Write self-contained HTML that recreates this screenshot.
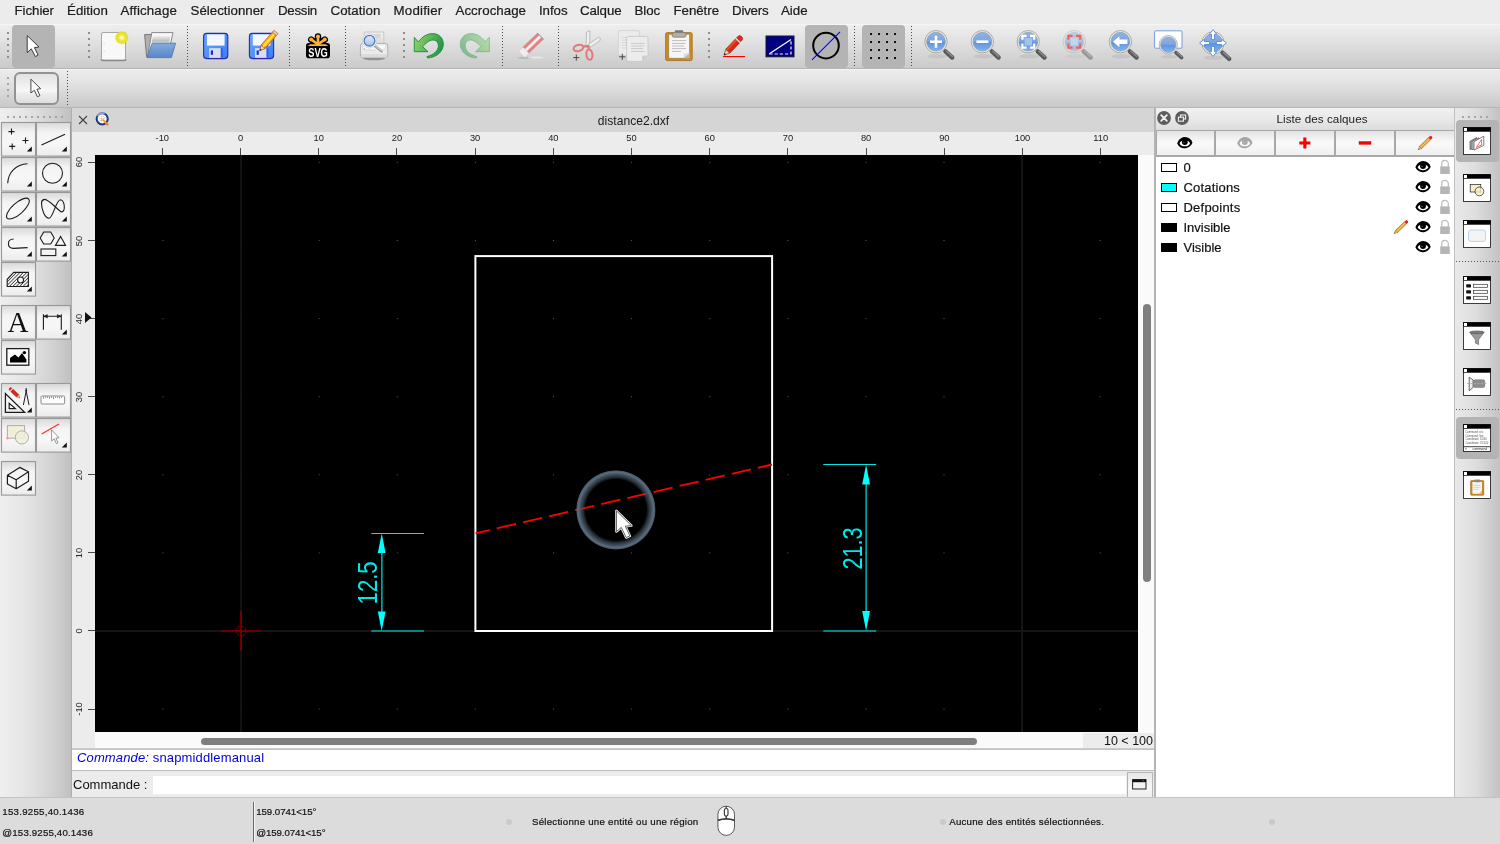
<!DOCTYPE html>
<html lang="fr">
<head>
<meta charset="utf-8">
<title>distance2.dxf</title>
<style>
html,body{margin:0;padding:0;}
body{width:1500px;height:844px;overflow:hidden;position:relative;background:#ececec;font-family:"Liberation Sans",sans-serif;color:#1a1a1a;}
#root{position:absolute;left:0;top:0;width:1500px;height:844px;will-change:transform;}
.abs{position:absolute;}
svg{position:absolute;overflow:visible;}
#menubar{left:0;top:0;width:1500px;height:24px;background:#ececec;}
#menubar span{position:absolute;top:2px;-webkit-text-stroke:0.22px #1c1c1c;font-size:13.3px;line-height:17px;white-space:nowrap;color:#1c1c1c;}
#tb1{left:0;top:24px;width:1500px;height:45px;background:linear-gradient(#f5f5f5 0,#f5f5f5 1px,#eeeeee 1px,#e6e6e6 12px,#cacaca 44px,#b6b6b6 44px);}
#tb2{left:0;top:69px;width:1500px;height:39px;background:linear-gradient(#f3f3f3 0,#f3f3f3 1px,#ececec 1px,#e4e4e4 12px,#c9c9c9 38px,#b6b6b6 38px);}
.hdl{position:absolute;width:2px;height:2px;background:#a6a6a6;}
.vsep{position:absolute;width:1px;background-image:linear-gradient(#555 34%,transparent 34%);background-size:1px 3px;}
#lefttb{left:0;top:108px;width:72px;height:690px;background:linear-gradient(90deg,#efefef,#e3e3e3 40%,#d0d0d0 75%,#c0c0c0);}
.lb{position:absolute;width:33px;height:33px;border:1px solid #9c9c9c;background:linear-gradient(#dcdcdc,#f6f6f6 35%,#f6f6f6 60%,#ececec);box-sizing:content-box;}
.lb svg{left:0;top:0;}
#tabbar{left:72px;top:108px;width:1082px;height:24px;background:#d5d5d5;}
#hruler{left:72px;top:132px;width:1082px;height:23px;background:#ececec;}
#vruler{left:72px;top:155px;width:23px;height:577px;background:#ececec;}
#canvas{left:95px;top:155px;width:1043px;height:577px;background:#000;overflow:hidden;}
#vscroll{left:1138px;top:155px;width:16px;height:577px;background:#fafafa;}
#hscroll{left:72px;top:732px;width:1082px;height:16px;background:#fafafa;}
#split{left:1154px;top:108px;width:2px;height:690px;background:#b4b4b4;}
#rightpanel{left:1156px;top:108px;width:298px;height:690px;background:#fff;}
#righttb{left:1455px;top:108px;width:45px;height:690px;background:linear-gradient(90deg,#e9e9e9,#dedede 45%,#c2c2c2);}
#cmdhist{left:72px;top:750px;width:1082px;height:20px;background:#fff;}
#cmdline{left:72px;top:772px;width:1082px;height:26px;background:#ececec;}
#status{left:0;top:798px;width:1500px;height:46px;background:#dcdcdc;}
.st{position:absolute;-webkit-text-stroke:0.2px #111;font-size:9.7px;line-height:12px;white-space:nowrap;color:#111;}
.rl{position:absolute;font-size:9.3px;line-height:10px;height:10px;color:#222;white-space:nowrap;text-align:center;}
.hrl{width:30px;margin-left:-15px;top:132.7px;}
.vrl{width:30px;height:10px;left:63.5px;transform:rotate(-90deg);margin-top:-5px;}
.tick{position:absolute;background:#4a4a4a;}
.lcb{position:absolute;top:131px;height:24px;background:linear-gradient(#e2e2e2,#f8f8f8 45%,#f8f8f8 60%,#efefef);}
.ly{position:absolute;-webkit-text-stroke:0.2px #111;left:1183.5px;margin-top:0.5px;font-size:13px;line-height:14px;color:#111;white-space:nowrap;}
</style>
</head>
<body>
<div id="root">
<div id="menubar" class="abs">
<span style="left:14.5px;letter-spacing:-0.06px">Fichier</span><span style="left:67px;letter-spacing:0.05px">Édition</span><span style="left:120.5px;letter-spacing:0.14px">Affichage</span><span style="left:190.5px;letter-spacing:0.01px">Sélectionner</span><span style="left:278px;letter-spacing:-0.28px">Dessin</span><span style="left:330.5px;letter-spacing:0.06px">Cotation</span><span style="left:393.5px;letter-spacing:0.21px">Modifier</span><span style="left:455.5px;letter-spacing:0.03px">Accrochage</span><span style="left:539px;letter-spacing:-0.07px">Infos</span><span style="left:580px;letter-spacing:-0.11px">Calque</span><span style="left:634.5px;letter-spacing:-0.09px">Bloc</span><span style="left:673.5px;letter-spacing:-0.05px">Fenêtre</span><span style="left:732px;letter-spacing:-0.20px">Divers</span><span style="left:781px;letter-spacing:-0.03px">Aide</span>
</div>
<div id="tb1" class="abs"></div>
<div class="abs" style="left:12px;top:25px;width:43px;height:43px;border-radius:4px;background:#b4b4b4"></div>
<div class="abs" style="left:805px;top:25px;width:43px;height:43px;border-radius:4px;background:#b4b4b4"></div>
<div class="abs" style="left:862px;top:25px;width:43px;height:43px;border-radius:4px;background:#b4b4b4"></div>
<svg width="1500" height="45" viewBox="0 24 1500 45" style="left:0;top:24px">
<defs>
<linearGradient id="gBlue" x1="0" y1="0" x2="0" y2="1"><stop offset="0" stop-color="#8eb2e4"/><stop offset="0.48" stop-color="#7ea6e0"/><stop offset="0.52" stop-color="#5f94dc"/><stop offset="1" stop-color="#7fb4f0"/></linearGradient>
<linearGradient id="gGreen" x1="0" y1="0" x2="1" y2="0.3"><stop offset="0" stop-color="#96d868"/><stop offset="1" stop-color="#2a9a4a"/></linearGradient>
<linearGradient id="gSave" x1="0" y1="0" x2="1" y2="1"><stop offset="0" stop-color="#6aa8ff"/><stop offset="1" stop-color="#3a7cf4"/></linearGradient>
<linearGradient id="gFold" x1="0" y1="0" x2="0" y2="1"><stop offset="0" stop-color="#86acdc"/><stop offset="1" stop-color="#5688c8"/></linearGradient>
<radialGradient id="gGlow"><stop offset="0" stop-color="#ffffff"/><stop offset="0.16" stop-color="#fdfbd4"/><stop offset="0.4" stop-color="#f0e832"/><stop offset="0.78" stop-color="#e6de1e" stop-opacity="0.95"/><stop offset="1" stop-color="#e6de1e" stop-opacity="0"/></radialGradient><linearGradient id="gPap" x1="0" y1="0" x2="0" y2="1"><stop offset="0" stop-color="#fcfcfc"/><stop offset="0.3" stop-color="#e2e2e2"/><stop offset="0.75" stop-color="#bcbcbc"/><stop offset="1" stop-color="#e0e0e0"/></linearGradient>
<g id="hd"><rect x="0" y="32" width="2" height="2"/><rect x="0" y="38" width="2" height="2"/><rect x="0" y="44" width="2" height="2"/><rect x="0" y="50" width="2" height="2"/><rect x="0" y="56" width="2" height="2"/></g>
<line id="sp" x1="0.5" y1="26" x2="0.5" y2="66" stroke="#4a4a4a" stroke-width="1" stroke-dasharray="1 2"/>
<g id="mag">
<ellipse cx="1" cy="14.6" rx="10" ry="2.2" fill="#000" opacity="0.07"/>
<line x1="9.4" y1="9.6" x2="16.2" y2="15.8" stroke="#5a5a5a" stroke-width="4.4" stroke-linecap="round"/>
<line x1="10.4" y1="9.4" x2="16.4" y2="14.8" stroke="#8e8e8e" stroke-width="1.3" stroke-linecap="round"/>
<circle cx="0" cy="0" r="11.2" fill="#ebebe4" stroke="#a4a49c" stroke-width="0.9"/>
<circle cx="0" cy="0" r="9.4" fill="url(#gBlue)" stroke="#8c9cb0" stroke-width="0.7"/>
</g>
</defs>
<g fill="#8e8e8e"><use href="#hd" x="7"/><use href="#hd" x="88"/><use href="#hd" x="403"/><use href="#hd" x="708"/></g>
<use href="#sp" x="187"/><use href="#sp" x="289"/><use href="#sp" x="345"/><use href="#sp" x="502"/><use href="#sp" x="558"/><use href="#sp" x="854"/><use href="#sp" x="911"/>
<!-- select arrow -->
<path d="M27.2 35.6 L27.2 52.6 L31.3 48.8 L35.4 56.6 L38.1 55 L34.4 47.6 L39 47 Z" fill="#fff" stroke="#3a3a3a" stroke-width="1" stroke-linejoin="round"/>
<!-- new -->
<rect x="101.5" y="32.5" width="24" height="27.5" rx="1.5" fill="#f8f8f8" stroke="#a6a6a6" stroke-width="1"/><path d="M103.6 43.4 h1.2 M103.6 51 h1.2" stroke="#c8c8c8" stroke-width="0.8"/>
<path d="M101 59.2 Q101 60.6 102.6 60.6 L124.2 60.6 Q126 60.6 126 59.2" fill="none" stroke="#8a8a8a" stroke-width="1.3"/>
<circle cx="121.8" cy="37.7" r="7.1" fill="url(#gGlow)"/>
<!-- open -->
<path d="M144.6 34.6 L151.4 34.6 L152 36.5 L166 36.5 L166 56.8 L146.6 56.8 Z" fill="#b0b0b0" stroke="#6e6e6e" stroke-width="0.9" stroke-linejoin="round"/>
<path d="M151.8 32.6 L173 32.6 L170 46 L147.6 56 Z" fill="#f8f8f8" stroke="#7e7e7e" stroke-width="0.9" stroke-linejoin="round"/>
<path d="M153.6 34.8 L171 34.8 L169 43 L151.2 43 Z" fill="url(#gPap)"/>
<path d="M152.2 43.2 L175.6 43.2 L171.4 57.6 L147 57.6 Z" fill="url(#gFold)" stroke="#4c7cbc" stroke-width="0.9" stroke-linejoin="round"/>
<!-- save -->
<g id="floppy">
<rect x="203.6" y="33.4" width="24.2" height="25.2" rx="3" fill="url(#gSave)" stroke="#2a2aa8" stroke-width="1.1"/>
<rect x="207" y="34.4" width="17.6" height="11.2" fill="#f4f6ff"/>
<rect x="209.2" y="48.2" width="11.4" height="9.6" fill="#dcdcea"/>
<rect x="210.8" y="50.4" width="2.2" height="4.4" fill="#0a30d8"/>
<rect x="221" y="48.2" width="1.6" height="9" fill="#2a5cf0"/>
</g>
<use href="#floppy" x="45.8"/>
<!-- pencil on save-as -->
<g transform="translate(259.6,50.8) rotate(-49)">
<path d="M0 0 L5.5 -2.6 L5.5 2.6 Z" fill="#f0d8b0" stroke="#8a3a10" stroke-width="0.6"/>
<path d="M0 0 L2 -0.95 L2 0.95 Z" fill="#222"/>
<rect x="5.5" y="-2.6" width="17" height="5.2" fill="#ffb400" stroke="#b84a10" stroke-width="0.7"/>
<rect x="5.5" y="-0.9" width="17" height="1.8" fill="#ffe060"/>
<rect x="22.5" y="-2.6" width="2.4" height="5.2" fill="#d8d8d8" stroke="#b84a10" stroke-width="0.6"/>
</g>
<!-- SVG logo -->
<g>
<g stroke="#000" stroke-width="6.4" stroke-linecap="round"><line x1="318" y1="44.5" x2="318" y2="36.4"/><line x1="318" y1="44.5" x2="311.2" y2="39.6"/><line x1="318" y1="44.5" x2="324.8" y2="39.6"/></g>
<rect x="306" y="43" width="24" height="15.2" rx="2.8" fill="#000"/>
<g stroke="#ffb13b" stroke-width="2.6" stroke-linecap="round"><line x1="318" y1="44.4" x2="318" y2="36.6"/><line x1="318" y1="44.4" x2="311.6" y2="39.8"/><line x1="318" y1="44.4" x2="324.4" y2="39.8"/></g>
<circle cx="318" cy="36.4" r="2" fill="#ffb13b"/><circle cx="311.2" cy="39.6" r="2" fill="#ffb13b"/><circle cx="324.8" cy="39.6" r="2" fill="#ffb13b"/>
<path d="M307.8 46 L328.2 46 L326 44.2 L310 44.2 Z" fill="#ffb13b"/>
<text x="318" y="56.8" text-anchor="middle" font-family="Liberation Sans, sans-serif" font-weight="bold" font-size="13.4" fill="#fff" textLength="19.6" lengthAdjust="spacingAndGlyphs">SVG</text>
</g>
<!-- print preview -->
<g>
<defs><linearGradient id="gLens" x1="0" y1="0" x2="0" y2="1"><stop offset="0" stop-color="#dde8f6"/><stop offset="0.55" stop-color="#c4d4ea"/><stop offset="1" stop-color="#a4bcdc"/></linearGradient></defs>
<ellipse cx="374" cy="58.4" rx="11" ry="1.8" fill="#000" opacity="0.3"/>
<rect x="364.4" y="32" width="19.4" height="14" rx="1" fill="#eeeeee" stroke="#bdbdbd" stroke-width="0.8"/>
<rect x="372" y="34" width="8.6" height="4" fill="#d6d6d6"/><rect x="377" y="38" width="5.6" height="7" fill="#e0e0e0"/>
<rect x="360.4" y="43.4" width="27.4" height="14.2" rx="2.6" fill="#ebebeb" stroke="#a8a8a8" stroke-width="0.9"/>
<path d="M361 54 h26.2 v1.6 q0 2 -2 2 h-22.2 q-2 0 -2 -2 Z" fill="#dcdcdc"/>
<path d="M362.6 45.6 q0 4.4 3 4.4 h17.2 q3 0 3 -4.4" fill="#f8f8f8" stroke="#c4c4c4" stroke-width="0.6"/>
<circle cx="364.4" cy="49" r="0.6" fill="#888"/>
<line x1="374.6" y1="45.6" x2="381.6" y2="51.4" stroke="#fafafa" stroke-width="4.6" stroke-linecap="round"/>
<line x1="374.6" y1="45.6" x2="381.6" y2="51.4" stroke="#a8a8a8" stroke-width="3" stroke-linecap="round"/>
<line x1="375.6" y1="45.6" x2="381.8" y2="50.8" stroke="#dcdcdc" stroke-width="0.9" stroke-linecap="round"/>
<circle cx="369.5" cy="40.8" r="7.2" fill="#fdfdfd" stroke="#c4c4c4" stroke-width="0.7"/>
<circle cx="369.5" cy="40.8" r="5.4" fill="url(#gLens)" stroke="#3f78c8" stroke-width="1.3"/>
</g>
<!-- undo / redo -->
<path id="undo" d="M414.3 37.3 L418.3 42 C422 37 427 33.6 432.5 33.6 C439 33.6 443.3 38 443.3 44.2 C443.3 52 436 57.4 427.6 58 L427 56.6 C433.4 55 438.4 51 438.4 45.6 C438.4 42 436 40 433 40 C429 40 425.5 43.5 422.7 46.7 L428 51.7 L414.3 51.7 Z" fill="url(#gGreen)" stroke="#1c8a3c" stroke-width="0.9" stroke-linejoin="round"/>
<use href="#undo" transform="translate(903.6,0) scale(-1,1)" opacity="0.48"/>
<!-- eraser -->
<g transform="translate(521.6,54.3) rotate(-43.8)" opacity="0.9">
<ellipse cx="3" cy="3.6" rx="7" ry="1.3" fill="#999" opacity="0.45" transform="rotate(43.8)"/><ellipse cx="14" cy="3.2" rx="8" ry="1.1" fill="#fff" opacity="0.5" transform="rotate(43.8)"/>
<rect x="0" y="-4.5" width="26.4" height="9" fill="#e47a7a"/>
<rect x="0" y="-1.4" width="26.4" height="2.8" fill="#f4f4f4"/>
<rect x="0" y="-4.5" width="6" height="9" fill="#f2f2f2" stroke="#ccc" stroke-width="0.4"/>
<rect x="25.6" y="-4.5" width="1" height="9" fill="#999"/>
</g>
<!-- cut -->
<g>
<path d="M586 47 L586.6 32 L590 30.6 L589.6 47 Z" fill="#efefef" stroke="#a8a8a8" stroke-width="0.7"/>
<path d="M588.6 44.2 L598.4 37.4 L600.6 38.6 L599.6 41 L590 47.4 Z" fill="#efefef" stroke="#a8a8a8" stroke-width="0.7"/>
<ellipse cx="578.4" cy="48" rx="4.9" ry="3.1" fill="none" stroke="#e27878" stroke-width="2" transform="rotate(-14 578.4 48)"/>
<ellipse cx="589.4" cy="54.6" rx="3" ry="5.2" fill="none" stroke="#e27878" stroke-width="2" transform="rotate(-6 589.4 54.6)"/>
<path d="M583 46.6 L588 46 L589.2 49.6" fill="none" stroke="#e27878" stroke-width="2.2"/>
<path d="M573.2 57.6 L579.4 57.6 M576.3 54.5 L576.3 60.7" stroke="#3a3a3a" stroke-width="0.9"/>
</g>
<!-- copy -->
<g>
<rect x="618.4" y="30.6" width="21.2" height="24.8" rx="1.6" fill="#ebebeb" stroke="#cfcfcf" stroke-width="0.8"/>
<path d="M622 37.4 h14 M622 40 h14 M622 42.6 h14 M622 45.4 h14 M622 48 h14" stroke="#d6d6d6" stroke-width="1"/>
<path d="M626.6 38 Q626.6 36.4 628.2 36.4 L646.4 36.4 Q648 36.4 648 38 L648 55.4 L642 61.4 L628.2 61.4 Q626.6 61.4 626.6 59.8 Z" fill="#ececec" stroke="#c4c4c4" stroke-width="0.8"/>
<path d="M648 55.4 L642 61.4 L642 56.6 Q642 55.4 643.2 55.4 Z" fill="#cfcfcf"/>
<path d="M631 43.4 h13.6 M631 46 h13 M631 48.6 h12 M631 51.4 h13.6" stroke="#cacaca" stroke-width="1"/>
<path d="M619.2 56.8 L625.4 56.8 M622.3 53.7 L622.3 59.9" stroke="#3a3a3a" stroke-width="0.9"/>
</g>
<!-- paste -->
<g>
<rect x="665.6" y="32.6" width="26.6" height="28" rx="1.6" fill="#cd8a1e" stroke="#a86a14" stroke-width="0.8"/>
<rect x="668.8" y="34.2" width="20.8" height="24" fill="#f6f6f6" stroke="#8a7a5a" stroke-width="0.6"/>
<path d="M683.6 58.2 L689.6 58.2 L689.6 52.6 Z" fill="#b8b8b8"/><path d="M683.6 58.2 L683.6 53.6 L688.6 53.2 Z" fill="#d8d8d8" opacity="0.8"/>
<path d="M672 40.6 h14 M672 43.4 h13.4 M672 46 h12 M672 48.6 h14 M672 51.4 h9" stroke="#bdbdbd" stroke-width="1"/>
<rect x="674.8" y="30.2" width="8.4" height="3.4" rx="0.8" fill="#7a7a72"/>
<rect x="672.2" y="32.6" width="13.8" height="4.6" rx="1.4" fill="#b0b0a4" stroke="#77776c" stroke-width="0.7"/>
</g>
<!-- pencil red -->
<g transform="translate(724,55.2) rotate(-46.6)">
<path d="M0 0 L5.6 -2.8 L5.6 2.8 Z" fill="#f0d4b0" stroke="#6a3a10" stroke-width="0.6"/>
<path d="M0 0 L2 -1 L2 1 Z" fill="#111"/>
<rect x="5.6" y="-2.8" width="14" height="5.6" fill="#e0241c" stroke="#7a3010" stroke-width="0.7"/>
<rect x="5.6" y="-2.4" width="14" height="1.7" fill="#e8501c"/>
<rect x="19.6" y="-2.8" width="1.8" height="5.6" fill="#cfcfcf"/>
<path d="M21.4 -2.8 L23.6 -2.8 Q25.6 -2.8 25.6 0 Q25.6 2.8 23.6 2.8 L21.4 2.8 Z" fill="#f02020" stroke="#7a3010" stroke-width="0.6"/>
</g>
<rect x="723" y="56" width="22" height="1.1" fill="#ff0000"/>
<!-- navy -->
<rect x="766" y="36" width="28" height="20.8" fill="#000080" stroke="#161636" stroke-width="1"/>
<path d="M769.4 53.8 L791 39.4" stroke="#fff" stroke-width="1.2"/>
<path d="M769.4 54 L791 54 L791 39.4" stroke="#e6e6f4" stroke-width="1.2" fill="none" stroke-dasharray="3.2 2"/>
<!-- circle -->
<circle cx="826" cy="45.6" r="12.8" fill="none" stroke="#000" stroke-width="2"/>
<path d="M812 59.8 L840 31.8" stroke="#0000ff" stroke-width="1.1"/>
<!-- grid -->
<g fill="#111">
<rect x="870" y="33" width="2" height="2"/><rect x="878" y="33" width="2" height="2"/><rect x="886" y="33" width="2" height="2"/><rect x="894" y="33" width="2" height="2"/>
<rect x="870" y="41" width="2" height="2"/><rect x="878" y="41" width="2" height="2"/><rect x="886" y="41" width="2" height="2"/><rect x="894" y="41" width="2" height="2"/>
<rect x="870" y="49" width="2" height="2"/><rect x="878" y="49" width="2" height="2"/><rect x="886" y="49" width="2" height="2"/><rect x="894" y="49" width="2" height="2"/>
<rect x="870" y="57" width="2" height="2"/><rect x="878" y="57" width="2" height="2"/><rect x="886" y="57" width="2" height="2"/><rect x="894" y="57" width="2" height="2"/>
</g>
<!-- zooms -->
<use href="#mag" x="936" y="41.7"/>
<path d="M930 41.7 h12 M936 35.7 v12" stroke="#fff" stroke-width="2.6"/>
<use href="#mag" x="982.4" y="41.7"/>
<path d="M976.4 41.7 h12" stroke="#fff" stroke-width="2.6"/>
<use href="#mag" x="1028.3" y="41.7"/>
<rect x="1024.6" y="38" width="7.4" height="7.4" fill="#a4c0ec"/>
<path d="M1022.4 39.8 v-4 h4.2 M1030 35.8 h4.2 v4 M1034.2 43.6 v4 h-4.2 M1026.6 47.6 h-4.2 v-4" stroke="#fff" stroke-width="2.2" fill="none"/>
<g opacity="0.5"><use href="#mag" x="1074.3" y="41.7"/></g>
<rect x="1070.6" y="38" width="7.4" height="7.4" fill="#c4d4ec"/>
<path d="M1068.4 39.8 v-4 h4.2 M1076 35.8 h4.2 v4 M1080.2 43.6 v4 h-4.2 M1072.6 47.6 h-4.2 v-4" stroke="#ee6262" stroke-width="2.2" fill="none"/>
<use href="#mag" x="1120.4" y="41.7"/>
<path d="M1113 41.7 L1119.4 36.2 L1119.4 39.4 L1127.4 39.4 L1127.4 44 L1119.4 44 L1119.4 47.2 Z" fill="#fff"/>
<!-- window zoom -->
<rect x="1154.6" y="30.8" width="27.4" height="17.4" rx="1" fill="#fdfdfd" stroke="#6a94d4" stroke-width="0.9"/>
<g transform="translate(1168.3,44.7) scale(0.82)"><use href="#mag"/></g>
<!-- pan -->
<use href="#mag" x="1213" y="43"/>
<g fill="#fff" stroke="#4a80d4" stroke-width="0.8" stroke-linejoin="round"><path transform="translate(1213,43) rotate(0)" d="M0 -13.4 L3.7 -8.6 L1.5 -8.6 L1.5 -3.4 L-1.5 -3.4 L-1.5 -8.6 L-3.7 -8.6 Z"/><path transform="translate(1213,43) rotate(90)" d="M0 -13.4 L3.7 -8.6 L1.5 -8.6 L1.5 -3.4 L-1.5 -3.4 L-1.5 -8.6 L-3.7 -8.6 Z"/><path transform="translate(1213,43) rotate(180)" d="M0 -13.4 L3.7 -8.6 L1.5 -8.6 L1.5 -3.4 L-1.5 -3.4 L-1.5 -8.6 L-3.7 -8.6 Z"/><path transform="translate(1213,43) rotate(270)" d="M0 -13.4 L3.7 -8.6 L1.5 -8.6 L1.5 -3.4 L-1.5 -3.4 L-1.5 -8.6 L-3.7 -8.6 Z"/></g>
</svg>
<div id="tb2" class="abs"></div>
<div class="abs" style="left:14px;top:72px;width:41px;height:29px;border:2px solid #929292;border-radius:6px;background:linear-gradient(#e2e2e2,#f1f1f1 45%,#f8f8f8 56%,#ececec 70%,#dedede)"></div>
<svg width="200" height="39" viewBox="0 69 200 39" style="left:0;top:69px">
<g fill="#a2a2a2"><rect x="7" y="77" width="2" height="2"/><rect x="7" y="83" width="2" height="2"/><rect x="7" y="89" width="2" height="2"/><rect x="7" y="95" width="2" height="2"/></g>
<line x1="67.5" y1="71" x2="67.5" y2="105" stroke="#4a4a4a" stroke-width="1" stroke-dasharray="1 2"/>
<path d="M30.9 79.2 L30.9 93 L34.3 90.3 L37.4 96.8 L39.9 95.6 L37 89.3 L40.6 88.6 Z" fill="#fafafa" stroke="#4a4a4a" stroke-width="1" stroke-linejoin="round"/>
</svg>
<div id="lefttb" class="abs"></div>
<div class="abs" style="left:71px;top:108px;width:1px;height:690px;background:#b0b0b0"></div>
<svg width="72" height="690" viewBox="0 108 72 690" style="left:0;top:108px">
<defs>
<linearGradient id="gBtn" x1="0" y1="0" x2="0" y2="1"><stop offset="0" stop-color="#d9d9d9"/><stop offset="0.3" stop-color="#f4f4f4"/><stop offset="0.62" stop-color="#f7f7f7"/><stop offset="1" stop-color="#ececec"/></linearGradient>
<rect id="lb" x="0.5" y="0.5" width="34" height="33.6" fill="url(#gBtn)" stroke="#989898" stroke-width="1.1"/>
<path id="tri" d="M30.8 24.4 L30.8 29.4 L25.8 29.4 Z" fill="#111"/>
<pattern id="hat" width="2.4" height="2.4" patternUnits="userSpaceOnUse" patternTransform="rotate(-45)"><rect width="2.4" height="0.8" fill="#444"/></pattern>
</defs>
<g fill="#a4a4a4"><rect x="7" y="116" width="2" height="2"/><rect x="13" y="116" width="2" height="2"/><rect x="19" y="116" width="2" height="2"/><rect x="25" y="116" width="2" height="2"/><rect x="31" y="116" width="2" height="2"/><rect x="37" y="116" width="2" height="2"/><rect x="43" y="116" width="2" height="2"/><rect x="49" y="116" width="2" height="2"/><rect x="55" y="116" width="2" height="2"/><rect x="61" y="116" width="2" height="2"/></g>
<use href="#lb" x="1" y="122"/><use href="#lb" x="36" y="122"/>
<use href="#lb" x="1" y="157"/><use href="#lb" x="36" y="157"/>
<use href="#lb" x="1" y="192"/><use href="#lb" x="36" y="192"/>
<use href="#lb" x="1" y="227"/><use href="#lb" x="36" y="227"/>
<use href="#lb" x="1" y="262"/>
<use href="#lb" x="1" y="305"/><use href="#lb" x="36" y="305"/>
<use href="#lb" x="1" y="340"/>
<use href="#lb" x="1" y="383"/><use href="#lb" x="36" y="383"/>
<use href="#lb" x="1" y="418"/><use href="#lb" x="36" y="418"/>
<use href="#lb" x="1" y="461"/>
<use href="#tri" x="1" y="122"/><use href="#tri" x="36" y="122"/><use href="#tri" x="1" y="157"/><use href="#tri" x="36" y="157"/><use href="#tri" x="1" y="192"/><use href="#tri" x="36" y="192"/><use href="#tri" x="1" y="227"/><use href="#tri" x="36" y="227"/><use href="#tri" x="1" y="262"/><use href="#tri" x="36" y="305"/><use href="#tri" x="1" y="383"/><use href="#tri" x="36" y="418"/><use href="#tri" x="1" y="461"/>
<g fill="none" stroke="#1c1c1c" stroke-width="1.1">
<!-- points -->
<path d="M8.5 131.6 h6 M11.5 128.6 v6 M22.5 140.5 h6 M25.5 137.5 v6 M9.2 146.4 h6 M12.2 143.4 v6"/>
<!-- line -->
<path d="M41.5 144.9 L65 134.2"/>
<!-- arc -->
<path d="M7.7 183.2 C8.2 172 16 164.6 27.5 163.8"/>
<!-- circle -->
<circle cx="52.5" cy="173.3" r="10"/>
<!-- ellipse -->
<ellipse cx="17.9" cy="208.6" rx="14.4" ry="5.6" transform="rotate(-41.6 17.9 208.6)"/>
<!-- spline -->
<path d="M41.5 203 C41.5 210 45 218.2 49 218.2 C53 218.2 56 200 60.4 199.8 C63 199.8 64.6 204 64.3 208 C64 212 62 212.6 60 211 C55 207 48 199 44.5 199.4 C42.4 199.8 41.5 201 41.5 203 Z"/>
<!-- polyline -->
<path d="M13.6 239 C10 239 8.4 241.4 8.4 243.6 C8.4 246.4 10.4 248.4 13.4 248.4 L27.6 247.6"/>
<!-- shapes -->
<path d="M43.7 232 L50.7 232 L54.2 238 L50.7 244 L43.7 244 L40.2 238 Z"/>
<path d="M60.6 236.4 L65.6 245.4 L55.4 245.4 Z"/>
<rect x="41" y="249" width="14.8" height="6.6"/>
<!-- hatch -->
<path d="M7.2 286.5 L7.2 279.3 L13.7 272.4 L28.4 272.4 L28.4 286.5 Z" fill="url(#hat)"/>
<circle cx="20.6" cy="280" r="3" fill="#f4f4f4"/>
<!-- dimension -->
<path d="M43.4 314.3 V329.7 M61.3 314.3 V329.7 M43.4 316.3 H61.3"/>
<path d="M43.6 316.3 L47.4 314.6 L47.4 318 Z M61.1 316.3 L57.3 314.6 L57.3 318 Z" fill="#1c1c1c" stroke-width="0.5"/>
<!-- image -->
<rect x="6.8" y="348.6" width="22" height="16.6" fill="#fff" stroke-width="1.3"/>
<path d="M10 362.4 L10 358 L15 354.4 L18.4 357.6 L22 353 L26.4 359.4 L26.4 362.4 Z" fill="#000" stroke="none"/>
<circle cx="24.4" cy="352.6" r="1.7" fill="#000" stroke="none"/>
<!-- triangle+pencil+compass -->
<path d="M5.4 393.6 L5.4 412.4 L24.6 412.4 Z" stroke-width="1.3"/>
<path d="M9.2 403.2 L9.2 408.6 L15.4 408.6 Z" stroke-width="1.2"/>
<path d="M26.2 388 L26.2 391 M26.2 391 L23.4 405 M26.2 391 L29 405" stroke-width="1"/>
<circle cx="26.2" cy="390.6" r="1" fill="#222" stroke="none"/>
<!-- cube -->
<path d="M7.4 475.2 L19.7 467.4 L28.5 471.8 L16.2 479.8 Z M7.4 475.2 L7.4 484 L16.2 488.7 L28.5 481.3 L28.5 471.8 M16.2 479.8 L16.2 488.7" stroke-width="1.2" stroke-linejoin="round"/>
</g>
<!-- A -->
<text x="18" y="332" text-anchor="middle" font-family="Liberation Serif, serif" font-size="29" fill="#111">A</text>
<!-- red pencil -->
<g transform="translate(20,398) rotate(-136.5)">
<path d="M0 0 L3.4 -1.7 L3.4 1.7 Z" fill="#e8c898" stroke="#6a3a10" stroke-width="0.4"/>
<rect x="3.4" y="-1.7" width="8" height="3.4" fill="#e0241c" stroke="#8a2010" stroke-width="0.4"/>
<rect x="11.4" y="-1.7" width="1" height="3.4" fill="#ddd"/>
<path d="M12.4 -1.7 h1 q1.3 0 1.3 1.7 q0 1.7 -1.3 1.7 h-1 Z" fill="#f02020"/>
</g>
<!-- ruler -->
<rect x="41" y="396" width="23.6" height="8" rx="1" fill="#fdfdfd" stroke="#8c8c8c" stroke-width="1"/>
<path d="M43.5 396.5 v2.2 M45.5 396.5 v1.4 M47.5 396.5 v1.4 M49.5 396.5 v2.2 M51.5 396.5 v1.4 M53.5 396.5 v2.6 M55.5 396.5 v1.4 M57.5 396.5 v1.4 M59.5 396.5 v2.2 M61.5 396.5 v1.4" stroke="#777" stroke-width="0.8" fill="none"/>
<!-- shapes faded -->
<rect x="7.4" y="425.6" width="17.2" height="12.6" fill="#f1eeda" stroke="#adadad" stroke-width="1"/>
<circle cx="21.9" cy="437.4" r="6.6" fill="#f1eeda" fill-opacity="0.85" stroke="#adadad" stroke-width="1"/>
<circle cx="7.4" cy="438.2" r="1.2" fill="#f59aa8"/>
<!-- red line + cursor -->
<path d="M41.6 433.9 L59 424" stroke="#ff2a2a" stroke-width="1.1"/>
<path d="M51.6 429.8 L51.6 441 L54.2 438.8 L56.4 443.6 L58 442.8 L55.8 438 L59 437.8 Z" fill="#fff" stroke="#8a8a8a" stroke-width="0.9" stroke-linejoin="round"/>
</svg>
<div id="tabbar" class="abs">
<div class="abs" id="tabtitle" style="left:41px;top:0.5px;width:1041px;text-align:center;font-size:12.1px;line-height:24px;color:#1a1a1a;white-space:nowrap">distance2.dxf</div>
<svg width="60" height="24" viewBox="72 108 60 24" style="left:0;top:0">
<path d="M79 116 L87 124 M87 116 L79 124" stroke="#444" stroke-width="1.1"/>
<circle cx="102.2" cy="118.8" r="4.6" fill="#fbfbfb"/>
<path d="M99 118.6 h6 M101.6 115.6 v6" stroke="#b8b8c0" stroke-width="0.6"/>
<path d="M99.4 120.6 h3 M103 116 l1.4 1.6" stroke="#e88a8a" stroke-width="0.6"/>
<circle cx="102.2" cy="118.8" r="5.6" fill="none" stroke="#22387e" stroke-width="2"/>
<path d="M97.3 116 A5.6 5.6 0 0 1 104.6 113.7" fill="none" stroke="#93a3cd" stroke-width="2"/>
<path d="M102.6 119.4 L106.8 123.8" stroke="#f0a020" stroke-width="2"/>
<path d="M102.4 119 L103.6 119.4 L102.8 120.4 Z" fill="#f8e0b0"/>
<circle cx="107.4" cy="124.4" r="1.2" fill="#e86a6a"/>
</svg>
</div>
<div id="hruler" class="abs"></div>
<div id="vruler" class="abs"></div>
<div class="rl hrl" style="left:162.3px">-10</div><div class="tick" style="left:162px;top:148px;width:1px;height:7px"></div>
<div class="rl hrl" style="left:240.5px">0</div><div class="tick" style="left:240px;top:148px;width:1px;height:7px"></div>
<div class="rl hrl" style="left:318.7px">10</div><div class="tick" style="left:318px;top:148px;width:1px;height:7px"></div>
<div class="rl hrl" style="left:396.9px">20</div><div class="tick" style="left:396px;top:148px;width:1px;height:7px"></div>
<div class="rl hrl" style="left:475.1px">30</div><div class="tick" style="left:475px;top:148px;width:1px;height:7px"></div>
<div class="rl hrl" style="left:553.3px">40</div><div class="tick" style="left:553px;top:148px;width:1px;height:7px"></div>
<div class="rl hrl" style="left:631.5px">50</div><div class="tick" style="left:631px;top:148px;width:1px;height:7px"></div>
<div class="rl hrl" style="left:709.7px">60</div><div class="tick" style="left:709px;top:148px;width:1px;height:7px"></div>
<div class="rl hrl" style="left:787.9px">70</div><div class="tick" style="left:787px;top:148px;width:1px;height:7px"></div>
<div class="rl hrl" style="left:866.1px">80</div><div class="tick" style="left:866px;top:148px;width:1px;height:7px"></div>
<div class="rl hrl" style="left:944.3px">90</div><div class="tick" style="left:944px;top:148px;width:1px;height:7px"></div>
<div class="rl hrl" style="left:1022.5px">100</div><div class="tick" style="left:1022px;top:148px;width:1px;height:7px"></div>
<div class="rl hrl" style="left:1100.7px">110</div><div class="tick" style="left:1100px;top:148px;width:1px;height:7px"></div>
<div class="rl vrl" style="top:709.1px">-10</div><div class="tick" style="left:88px;top:709px;width:7px;height:1px"></div>
<div class="rl vrl" style="top:631.0px">0</div><div class="tick" style="left:88px;top:630px;width:7px;height:1px"></div>
<div class="rl vrl" style="top:552.9px">10</div><div class="tick" style="left:88px;top:552px;width:7px;height:1px"></div>
<div class="rl vrl" style="top:474.8px">20</div><div class="tick" style="left:88px;top:474px;width:7px;height:1px"></div>
<div class="rl vrl" style="top:396.7px">30</div><div class="tick" style="left:88px;top:396px;width:7px;height:1px"></div>
<div class="rl vrl" style="top:318.6px">40</div><div class="tick" style="left:88px;top:318px;width:7px;height:1px"></div>
<div class="rl vrl" style="top:240.5px">50</div><div class="tick" style="left:88px;top:240px;width:7px;height:1px"></div>
<div class="rl vrl" style="top:162.4px">60</div><div class="tick" style="left:88px;top:162px;width:7px;height:1px"></div>
<svg width="8" height="11" style="left:85px;top:312px"><path d="M0 0L6.5 5.5L0 11Z" fill="#111"/></svg>
<div id="canvas" class="abs">
<svg width="1043" height="577" viewBox="95 155 1043 577" style="left:0;top:0">
<defs>
<pattern id="grid" x="240.6" y="630.5" width="78.1" height="78.1" patternUnits="userSpaceOnUse"><rect x="0" y="0" width="1" height="1" fill="#5a5a5a"/></pattern>
<radialGradient id="ring" cx="0.5" cy="0.5" r="0.5">
<stop offset="0.76" stop-color="#56687a" stop-opacity="0"/>
<stop offset="0.86" stop-color="#43525f" stop-opacity="0.8"/>
<stop offset="0.94" stop-color="#5a6c7d" stop-opacity="1"/>
<stop offset="0.975" stop-color="#536576" stop-opacity="0.9"/>
<stop offset="1" stop-color="#56687a" stop-opacity="0"/>
</radialGradient>
</defs>
<rect x="95" y="155" width="1043" height="577" fill="url(#grid)"/>
<!-- axes / meta grid -->
<rect x="240" y="155" width="2" height="577" fill="#121212"/>
<rect x="1021" y="155" width="2" height="577" fill="#151515"/>
<rect x="95" y="630" width="1043" height="2" fill="#151515"/>
<!-- origin -->
<rect x="221" y="630" width="40" height="2" fill="#6a0000"/>
<rect x="240" y="611" width="2" height="40" fill="#6a0000"/>
<circle cx="241" cy="631" r="5" fill="none" stroke="#800000" stroke-width="1"/>
<!-- rectangle -->
<rect x="475.4" y="256.1" width="296.7" height="374.9" fill="none" stroke="#fff" stroke-width="2"/>
<!-- dashed line -->
<line x1="475.4" y1="533.4" x2="772.1" y2="464.5" stroke="#ff0000" stroke-width="1.8" stroke-dasharray="19.6 7.2" stroke-dashoffset="4.8"/>
<!-- left dimension -->
<g stroke="#00e6e6" fill="#00ffff">
<line x1="371.3" y1="533.5" x2="424" y2="533.5" stroke-width="1"/>
<line x1="371.3" y1="631" x2="424" y2="631" stroke-width="1.1" stroke="#00f0f0"/>
<line x1="381.9" y1="540" x2="381.9" y2="625" stroke-width="1.15" stroke="#00f0f0"/>
<polygon points="381.7,533.5 385.6,553 377.8,553" stroke="none"/>
<polygon points="381.7,631 385.6,611.5 377.8,611.5" stroke="none"/>
</g>
<text transform="translate(377.4,604.4) rotate(-90) scale(0.79,1)" font-family="Liberation Sans, sans-serif" font-size="28" fill="#00e8e8">12.5</text>
<!-- right dimension -->
<g stroke="#00e6e6" fill="#00ffff">
<line x1="823.3" y1="464.5" x2="876.2" y2="464.5" stroke-width="1"/>
<line x1="823.3" y1="631" x2="876.2" y2="631" stroke-width="1.1" stroke="#00f0f0"/>
<line x1="866.1" y1="470" x2="866.1" y2="625" stroke-width="1.15" stroke="#00f0f0"/>
<polygon points="866.1,464.5 870,484.5 862.2,484.5" stroke="none"/>
<polygon points="866.1,631 870,611 862.2,611" stroke="none"/>
</g>
<text transform="translate(861.8,569.6) rotate(-90) scale(0.775,1)" font-family="Liberation Sans, sans-serif" font-size="28" fill="#00e8e8">21.3</text>
<!-- snap ring + cursor -->
<circle cx="615.9" cy="509.9" r="40" fill="url(#ring)"/>
<path d="M616.4 510.8 L616.4 531.6 L621.3 527.4 L626.2 537.6 L629.9 535.9 L625.3 526.2 L631.4 525.6 Z" fill="#fff" stroke="#fff" stroke-width="2.4" stroke-linejoin="round"/>
<path d="M616.4 510.8 L616.4 531.6 L621.3 527.4 L626.2 537.6 L629.9 535.9 L625.3 526.2 L631.4 525.6 Z" fill="#fff" stroke="#333" stroke-width="0.8" stroke-linejoin="round"/>
</svg>
</div>
<div id="vscroll" class="abs"><div class="abs" style="left:5px;top:148.5px;width:7.6px;height:278.5px;border-radius:4px;background:#7f7f7f"></div></div>
<div id="hscroll" class="abs"><div class="abs" style="left:129px;top:5.6px;width:776px;height:7.6px;border-radius:4px;background:#7f7f7f"></div>
<div class="abs" style="left:1011px;top:1px;width:71px;height:15px;background:#ececec"></div>
<div class="abs" id="zl" style="right:1px;top:1px;font-size:12.5px;line-height:16px;color:#111;white-space:nowrap">10 &lt; 100</div>
</div>
<div id="split" class="abs"></div>
<div id="rightpanel" class="abs"></div>
<div class="abs" style="left:1156px;top:108px;width:298px;height:22px;background:linear-gradient(#f1f1f1,#e9e9e9 50%,#dcdcdc)"></div>
<div class="abs" id="lctitle" style="left:1190px;top:107px;width:264px;text-align:center;font-size:11.6px;line-height:23px;color:#1a1a1a;white-space:nowrap;letter-spacing:0.09px">Liste des calques</div>
<div class="abs" style="left:1156px;top:130px;width:298px;height:27px;background:#a8a8a8"></div>
<div class="lcb" style="left:1157px;width:57px"></div><div class="lcb" style="left:1216px;width:58px"></div><div class="lcb" style="left:1276px;width:58px"></div><div class="lcb" style="left:1336px;width:58px"></div><div class="lcb" style="left:1396px;width:58px"></div>
<div class="abs" style="left:1454px;top:108px;width:1px;height:690px;background:#c0c0c0"></div>
<div class="ly" style="top:160px">0</div><div class="ly" style="top:180px;letter-spacing:0.17px">Cotations</div><div class="ly" style="top:200px;letter-spacing:0.22px">Defpoints</div><div class="ly" style="top:220px">Invisible</div><div class="ly" style="top:240px">Visible</div>
<svg width="298" height="150" viewBox="1156 108 298 150" style="left:1156px;top:108px">
<defs>
<g id="eye">
<path d="M-7.6 0.6 C-6.4 -3.4 -3 -5.7 0.2 -5.7 C3.6 -5.7 6.4 -3.6 7.7 0 C6.4 3 3.4 5.5 -0.4 5.5 C-3.6 5.5 -6.4 3.6 -7.6 0.6 Z"/>
<ellipse cx="0" cy="0.6" rx="5.1" ry="2.9" fill="#fff"/>
<circle cx="0" cy="-0.7" r="2.95"/>
<circle cx="-0.9" cy="-0.5" r="0.55" fill="#999"/>
</g>
<g id="lock" fill="#b5b5b5"><rect x="-4.8" y="-0.4" width="9.6" height="7.6"/><path d="M-3.3 0 V-3 A3.3 3.5 0 0 1 3.3 -3 V0" fill="none" stroke="#bdbdbd" stroke-width="1.3"/></g>
<g id="pen">
<path d="M0 0 L3.2 -1.6 L3.2 1.6 Z" fill="#e4c48c" stroke="#7a5a20" stroke-width="0.4"/><path d="M0 0 L1.2 -0.6 L1.2 0.6 Z" fill="#443"/>
<rect x="3.2" y="-1.6" width="12.6" height="3.2" fill="#dda23c" stroke="#9a6a1c" stroke-width="0.5"/><rect x="3.2" y="-0.5" width="12.6" height="1" fill="#f0c468"/>
<path d="M15.8 -1.6 h2 q1.2 0 1.2 1.6 q0 1.6 -1.2 1.6 h-2 Z" fill="#e8202a"/>
</g>
</defs>
<!-- title buttons -->
<circle cx="1164" cy="118" r="6.9" fill="#5c5c5c"/><path d="M1161.2 115.2 L1166.8 120.8 M1166.8 115.2 L1161.2 120.8" stroke="#f0f0f0" stroke-width="1.9" stroke-linecap="round"/>
<circle cx="1182" cy="118" r="6.9" fill="#5c5c5c"/><rect x="1180.6" y="115" width="5" height="4" fill="none" stroke="#f0f0f0" stroke-width="1.1"/><rect x="1178.4" y="117.2" width="5" height="4" fill="#5c5c5c" stroke="#f0f0f0" stroke-width="1.1"/>
<!-- toolbar icons -->
<use href="#eye" x="1184.8" y="142.8" fill="#000"/>
<g opacity="0.32"><use href="#eye" x="1244.8" y="142.8" fill="#000"/></g>
<path d="M1299.4 143 h11 M1304.9 137.5 v11" stroke="#c80000" stroke-width="3"/><path d="M1299.8 143 h10.2 M1304.9 137.9 v10.2" stroke="#ff0000" stroke-width="2.2"/>
<rect x="1359" y="141.5" width="12" height="2.9" fill="#ff0000" stroke="#c80000" stroke-width="0.4"/>
<use href="#pen" transform="translate(1418.2,149.7) rotate(-44.2)"/>
<!-- rows -->
<g stroke="#000" stroke-width="1">
<rect x="1161.5" y="163.5" width="15" height="8" fill="#fff"/><rect x="1161.5" y="183.5" width="15" height="8" fill="#00ffff"/><rect x="1161.5" y="203.5" width="15" height="8" fill="#fff"/><rect x="1161.5" y="223.5" width="15" height="8" fill="#000"/><rect x="1161.5" y="243.5" width="15" height="8" fill="#000"/>
</g>
<use href="#eye" x="1423" y="166.7"/><use href="#eye" x="1423" y="186.7"/><use href="#eye" x="1423" y="206.7"/><use href="#eye" x="1423" y="226.7"/><use href="#eye" x="1423" y="246.7"/>
<use href="#lock" x="1445" y="166.8"/><use href="#lock" x="1445" y="186.8"/><use href="#lock" x="1445" y="206.8"/><use href="#lock" x="1445" y="226.8"/><use href="#lock" x="1445" y="246.8"/>
<use href="#pen" transform="translate(1394.2,233.6) rotate(-43.7) scale(0.98)"/>
</svg>
<div id="righttb" class="abs"></div>
<div class="abs" style="left:1456px;top:120px;width:43px;height:42px;border-radius:4px;background:#b4b4b4"></div>
<div class="abs" style="left:1456px;top:417px;width:43px;height:42px;border-radius:4px;background:#b4b4b4"></div>
<svg width="45" height="690" viewBox="1455 108 45 690" style="left:1455px;top:108px">
<defs>
<g id="win"><rect x="0.5" y="0.5" width="27" height="27" fill="#fff" stroke="#111" stroke-width="0.8"/><rect x="0.3" y="0.3" width="27.4" height="4.4" fill="#000"/><rect x="1" y="1" width="3" height="3" fill="#fff"/></g>
</defs>
<g fill="#a6a6a6"><rect x="1462" y="116" width="2" height="2"/><rect x="1468" y="116" width="2" height="2"/><rect x="1474" y="116" width="2" height="2"/><rect x="1480" y="116" width="2" height="2"/><rect x="1486" y="116" width="2" height="2"/></g>
<line x1="1456" y1="261.5" x2="1500" y2="261.5" stroke="#555" stroke-width="1" stroke-dasharray="1 2"/>
<line x1="1456" y1="409.5" x2="1500" y2="409.5" stroke="#555" stroke-width="1" stroke-dasharray="1 2"/>
<use href="#win" x="1463" y="127"/><use href="#win" x="1463" y="174"/><use href="#win" x="1463" y="220"/><use href="#win" x="1463" y="276"/><use href="#win" x="1463" y="322"/><use href="#win" x="1463" y="368"/><use href="#win" x="1463" y="424"/><use href="#win" x="1463" y="471"/>
<!-- 1: layers -->
<path d="M1470 141.2 L1476.6 137.6 L1476.6 146.6 L1470 149.6 Z" fill="#a8a8a8" stroke="#4a4a4a" stroke-width="0.7"/>
<path d="M1472 141.4 L1478.6 137.8 L1478.6 146.8 L1472 149.8 Z" fill="#c8c8c8" stroke="#4a4a4a" stroke-width="0.6"/>
<path d="M1474 141.6 L1483.8 136.2 L1483.8 145.4 L1474 150 Z" fill="#fff" stroke="#4a4a4a" stroke-width="0.7"/>
<path d="M1476.4 147.4 L1481.6 139.4 L1481.6 145 Z" fill="none" stroke="#f04848" stroke-width="0.8"/>
<!-- 2: shapes -->
<rect x="1470.2" y="184.4" width="10.6" height="7.6" fill="#f7eec4" stroke="#222" stroke-width="0.7"/>
<circle cx="1479.4" cy="191.4" r="4.4" fill="#f7eec4" fill-opacity="0.75" stroke="#222" stroke-width="0.7"/>
<!-- 3: view -->
<rect x="1468.6" y="230" width="17" height="11.4" rx="2.4" fill="#f4f4f4" stroke="#bcd0ee" stroke-width="1"/>
<!-- 4: list -->
<g fill="#111"><rect x="1466.2" y="284.2" width="4.8" height="3.2" rx="0.6"/><rect x="1466.2" y="290.2" width="4.8" height="3.2" rx="0.6"/><rect x="1466.2" y="296.2" width="4.8" height="3.2" rx="0.6"/></g>
<g fill="#fff" stroke="#333" stroke-width="0.7"><rect x="1473.4" y="284.3" width="14" height="3"/><rect x="1473.4" y="290.3" width="14" height="3"/><rect x="1473.4" y="296.3" width="14" height="3"/></g>
<!-- 5: funnel -->
<path d="M1469.8 332.4 L1484 332.4 L1478.6 339.6 L1478.6 344.6 L1475.4 343 L1475.4 339.6 Z" fill="#9a9a9a" stroke="#5a5a5a" stroke-width="0.6" stroke-linejoin="round"/>
<ellipse cx="1476.9" cy="332.3" rx="7.1" ry="1.4" fill="#7a7a7a" stroke="#444" stroke-width="0.5"/>
<!-- 6: screw -->
<path d="M1469.2 377.2 L1469.2 390.8 L1473.2 387.4 L1473.2 380 Z" fill="#ececec" stroke="#444" stroke-width="0.8" stroke-linejoin="round"/>
<rect x="1473.2" y="379.8" width="11.6" height="7.6" rx="1.6" fill="#8e8e8e" stroke="#666" stroke-width="0.5"/>
<path d="M1467 383.5 h20" stroke="#f08a8a" stroke-width="0.8" stroke-dasharray="2.4 1"/>
<!-- 7: command -->
<path d="M1463.5 446.7 h27" stroke="#111" stroke-width="0.8"/>
<text x="1465.4" y="433.4" font-family="Liberation Sans, sans-serif" font-size="2.7" fill="#555">Command: circ</text>
<text x="1465.4" y="436.8" font-family="Liberation Sans, sans-serif" font-size="2.7" fill="#555">Command: line</text>
<text x="1465.4" y="440.2" font-family="Liberation Sans, sans-serif" font-size="2.7" fill="#555">Coordinate: 10/40</text>
<text x="1465.4" y="443.6" font-family="Liberation Sans, sans-serif" font-size="2.7" fill="#555">Coordinate: 70/100</text>
<text x="1465" y="450.3" font-family="Liberation Sans, sans-serif" font-size="3.3" fill="#222">&lt;</text>
<text x="1472.6" y="450.3" font-family="Liberation Sans, sans-serif" font-size="3.3" fill="#222">command</text>
<!-- 8: clipboard -->
<rect x="1470.6" y="480.6" width="13.2" height="14.6" rx="0.8" fill="#cd8a1e" stroke="#9a6414" stroke-width="0.6"/>
<rect x="1472.4" y="482" width="9.6" height="11.8" fill="#f4f4f4"/>
<rect x="1474.4" y="479.6" width="5.6" height="2.6" rx="0.6" fill="#8a8a80"/>
<path d="M1473.6 485.4 h7 M1473.6 487.4 h7 M1473.6 489.4 h5" stroke="#c8c8c8" stroke-width="0.7"/>
<path d="M1479 493.8 L1482 493.8 L1482 490.8 Z" fill="#bbb"/>
</svg>
<div class="abs" style="left:72px;top:732px;width:23px;height:16px;background:#ececec"></div>
<div class="abs" style="left:72px;top:748px;width:1082px;height:2px;background:linear-gradient(#d2d2d2,#bcbcbc)"></div>
<div id="cmdhist" class="abs"><span class="abs" id="hist" style="left:5px;top:0;font-size:13px;line-height:16px;color:#0000d8;white-space:nowrap;letter-spacing:0.14px"><i>Commande:</i> snapmiddlemanual</span></div>
<div class="abs" style="left:72px;top:770px;width:1082px;height:1px;background:#bdbdbd"></div>
<div class="abs" style="left:72px;top:771px;width:1082px;height:27px;background:#ececec"></div>
<div class="abs" style="left:153px;top:776px;width:973px;height:18px;background:#fff"></div>
<div class="abs" id="cmdlab" style="left:73px;top:777px;font-size:13px;line-height:16px;color:#111;white-space:nowrap">Commande :</div>
<div class="abs" style="left:1127px;top:772px;width:24px;height:24px;border:1px solid #b4b4b4;background:linear-gradient(#e8e8e8,#f6f6f6 60%,#ededed)"></div>
<svg width="16" height="12" style="left:1132px;top:779px"><rect x="0.6" y="0.6" width="13.4" height="9.4" fill="#f2f2f2" stroke="#222" stroke-width="1"/><rect x="0.6" y="0.6" width="13.4" height="2.6" fill="#111"/><rect x="10.4" y="1.2" width="1.2" height="1" fill="#888"/></svg>
<div class="abs" style="left:0px;top:797px;width:1500px;height:1px;background:#c4c4c4"></div>
<div id="status" class="abs">
<div class="st" id="s1" style="left:2.3px;letter-spacing:0.25px;top:8px">153.9255,40.1436</div>
<div class="st" id="s2" style="left:2.3px;letter-spacing:0.16px;top:29px">@153.9255,40.1436</div>
<div class="abs" style="left:253px;top:4px;width:1px;height:40px;background:#6a6a6a"></div>
<div class="abs" style="left:254px;top:4px;width:1px;height:40px;background:#f4f4f4"></div>
<div class="st" id="s3" style="left:256.2px;letter-spacing:-0.05px;top:8px">159.0741&lt;15°</div>
<div class="st" id="s4" style="left:256.2px;letter-spacing:-0.1px;top:29px">@159.0741&lt;15°</div>
<div class="abs" style="left:506px;top:21px;width:6px;height:6px;border-radius:3px;background:#cacaca"></div>
<div class="st" id="s5" style="left:532px;letter-spacing:0.24px;top:18px">Sélectionne une entité ou une région</div>
<svg width="20" height="32" style="left:717px;top:7px"><rect x="0.9" y="1.2" width="16.6" height="29.2" rx="8.3" ry="8.3" fill="#fff" stroke="#333" stroke-width="0.8"/><path d="M0.9 15.4 Q9.2 12.4 17.5 15.4" fill="none" stroke="#3a3a3a" stroke-width="1.7"/><path d="M9.2 1.4 V3.6 M9.2 11 V14" stroke="#3a3a3a" stroke-width="1.4"/><rect x="7.4" y="3.5" width="3.6" height="7.6" rx="1.8" fill="#fff" stroke="#3a3a3a" stroke-width="1.2"/></svg>
<div class="abs" style="left:940px;top:21px;width:6px;height:6px;border-radius:3px;background:#cacaca"></div>
<div class="st" id="s6" style="left:949.2px;letter-spacing:0.24px;top:18px">Aucune des entités sélectionnées.</div>
<div class="abs" style="left:1269px;top:21px;width:6px;height:6px;border-radius:3px;background:#cacaca"></div>
</div>
</div>
</body>
</html>
